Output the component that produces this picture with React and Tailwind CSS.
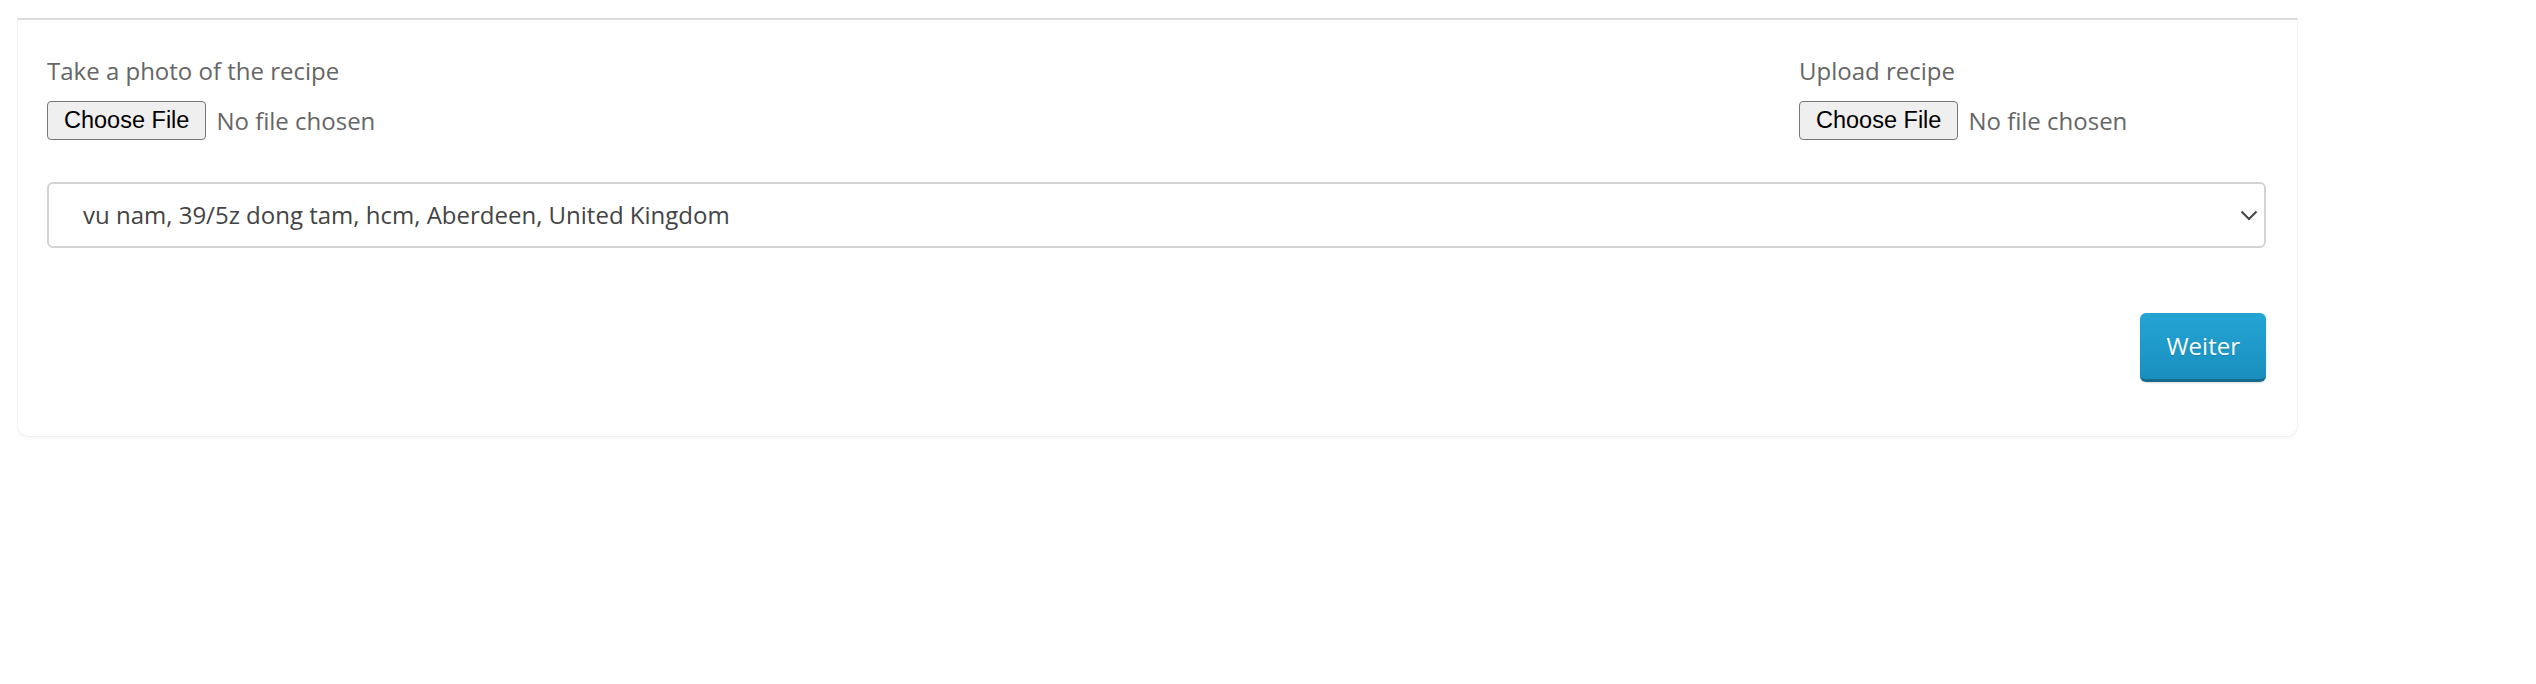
import React from 'react';

const FileField = ({ label }) => (
  <div>
    <label className="block text-[24px] leading-[36px] text-[#666]">{label}</label>
    <div className="mt-[12px] flex items-center">
      <span className="h-[39px] px-[16px] flex items-center bg-[#efefef] border-[1.5px] border-[#767676] rounded-[4px] text-[23.5px] text-black font-['Liberation_Sans',Arial,sans-serif]">
        Choose File
      </span>
      <span className="ml-[10px] text-[24px] text-[#666]">No file chosen</span>
    </div>
  </div>
);

export default function App() {
  return (
    <div className="min-h-[684px] bg-white font-['Open_Sans',sans-serif] pt-[18px]">
      <div className="ml-[17px] w-[2281px] border-t-2 border-t-[#dcdcdc] border-x border-b border-x-[#f2f2f2] border-b-[#eeeeee] rounded-b-xl shadow-[0_2px_3px_rgba(0,0,0,0.03)] pl-[29px] pr-[31px] pt-[33px] pb-[54px]">
        {/* file inputs */}
        <div className="grid grid-cols-[1fr_467px]">
          <FileField label="Take a photo of the recipe" />
          <FileField label="Upload recipe" />
        </div>

        {/* address select */}
        <div className="mt-[42px] relative h-[66px] border-2 border-[#d3d3d3] rounded-md flex items-center pl-[34px] text-[24px] text-[#444]">
          vu nam, 39/5z dong tam, hcm, Aberdeen, United Kingdom
          <svg className="absolute right-[6px] top-[26px]" width="18" height="11" viewBox="0 0 18 11" fill="none">
            <path d="M1.5 1.5 L9 9 L16.5 1.5" stroke="#444" strokeWidth="2" />
          </svg>
        </div>

        <div className="mt-[65px] flex justify-end">
          <button className="h-[69px] px-[26px] rounded-md text-[24px] text-white bg-gradient-to-b from-[#23a5d4] to-[#1a8fbf] border-b-[3px] border-b-[#176b8c] shadow-[0_1px_2px_rgba(0,0,0,0.15)] [text-shadow:0_1px_1px_rgba(0,0,0,0.15)]">
            Weiter
          </button>
        </div>
      </div>
    </div>
  );
}
